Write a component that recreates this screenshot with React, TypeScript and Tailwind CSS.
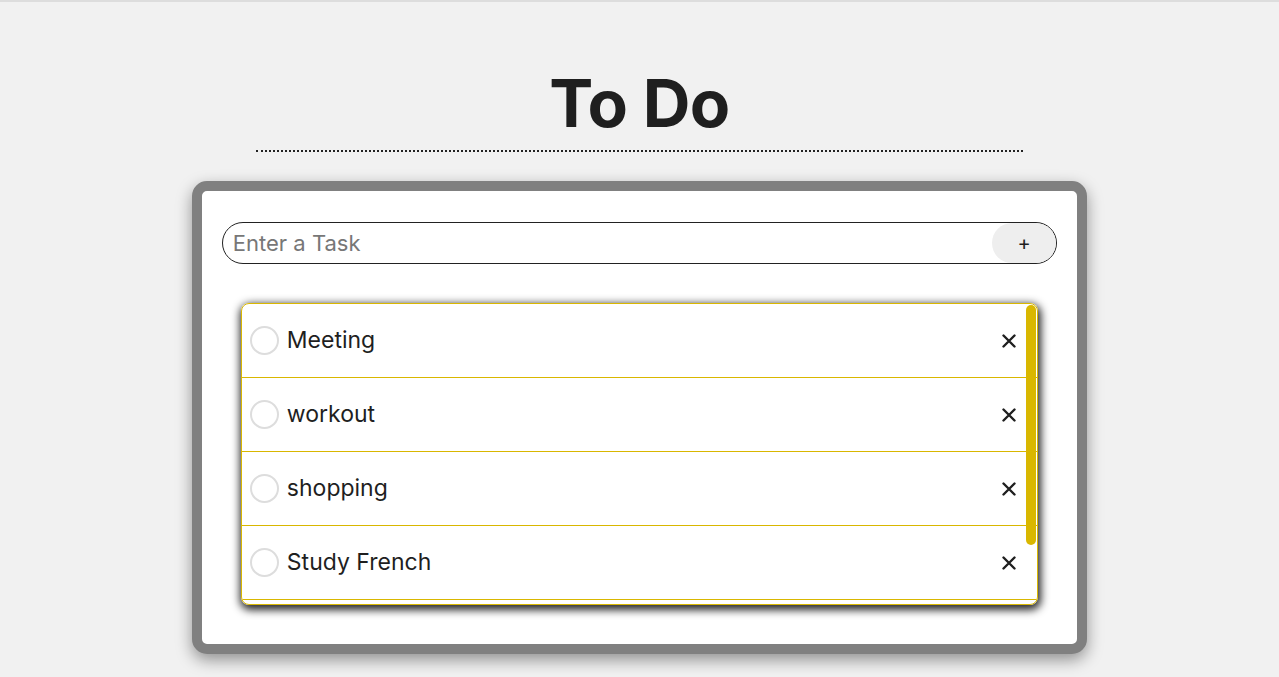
import { useState } from 'react';

const tasks = ['Meeting', 'workout', 'shopping', 'Study French', 'Read a book'];

export default function App() {
  const [items, setItems] = useState(tasks);
  const [text, setText] = useState('');

  return (
    <div className="min-h-[677px] bg-[#f1f1f1] border-t-2 border-[#dddddd] font-['Inter','Noto_Sans',sans-serif] text-[#1f1f1f] overflow-hidden">
      <h1 className="text-center text-[66px] font-bold leading-none pt-[68px] tracking-[-0.5px]">To Do</h1>
      <div className="w-[60%] mx-auto mt-[14px] border-b-2 border-dotted border-[#222]" />

      <div className="w-[70%] mx-auto mt-[29px] border-[10px] border-[#808080] rounded-[15px] bg-white shadow-[0_6px_16px_rgba(0,0,0,0.4)] px-[20px] pt-[31px] pb-[39px]">
        <div className="flex h-[42px] items-center rounded-full border border-[#222] overflow-hidden">
          <input
            value={text}
            onChange={(e) => setText(e.target.value)}
            placeholder="Enter a Task"
            className="flex-1 h-full pl-[10px] text-[22px] outline-none placeholder:text-[#777] bg-transparent"
          />
          <button
            onClick={() => {
              if (text.trim()) setItems([...items, text.trim()]);
              setText('');
            }}
            className="h-full w-[64px] rounded-full bg-[#eeeeee] text-[20px] leading-none"
          >
            +
          </button>
        </div>

        <div className="relative mx-[19px] mt-[39px]">
          <ul className="h-[302px] overflow-y-auto border border-[#d9b700] rounded-[8px] shadow-[1px_3px_8px_2px_rgba(0,0,0,0.85)]">
            {items.map((t, i) => (
              <li key={t + i} className="flex h-[74px] items-center border-b border-[#d9b700] pl-[8px] pr-[18px]">
                <span className="w-[29px] h-[29px] rounded-full border-2 border-[#dddddd] shrink-0" />
                <span className="ml-[8px] flex-1 text-[23px]">{t}</span>
                <button
                  onClick={() => setItems(items.filter((_, j) => j !== i))}
                  className="w-[20px] h-[20px] flex items-center justify-center"
                >
                  <svg width="14" height="14" viewBox="0 0 14 14">
                    <path d="M1.5 1.5 L12.5 12.5 M12.5 1.5 L1.5 12.5" stroke="#1f1f1f" strokeWidth="2.4" strokeLinecap="round" />
                  </svg>
                </button>
              </li>
            ))}
          </ul>
          <div className="absolute right-[2px] top-[2px] w-[10px] h-[240px] rounded-full bg-[#d9b700]" />
        </div>
      </div>
    </div>
  );
}
